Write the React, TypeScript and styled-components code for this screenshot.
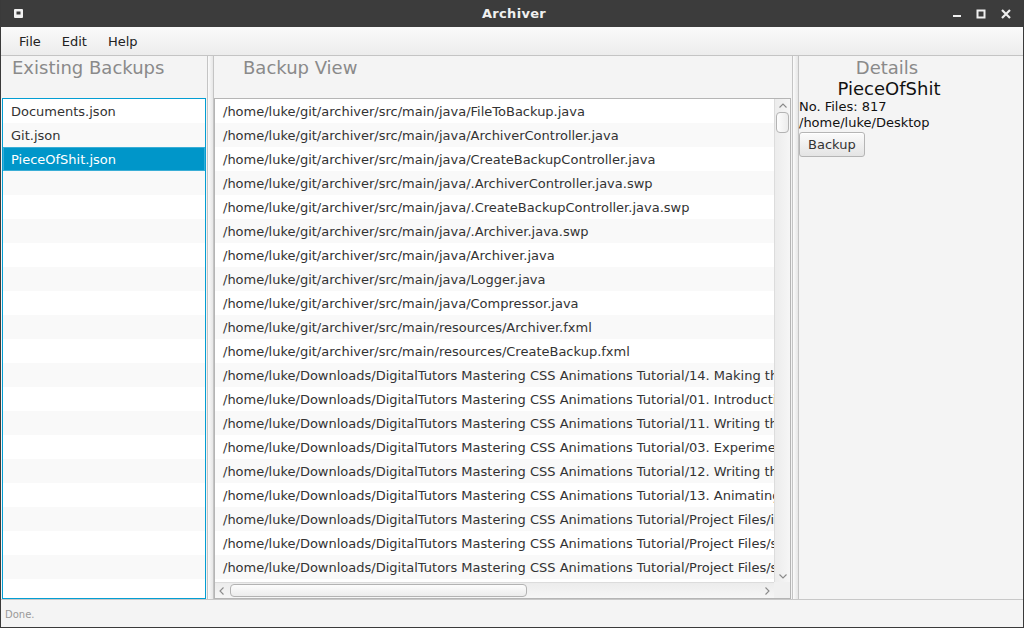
import React from "react";
import styled, { createGlobalStyle } from "styled-components";

const GlobalStyle = createGlobalStyle`
  *, *::before, *::after {
    box-sizing: border-box;
  }
  html, body {
    margin: 0;
    padding: 0;
    background: #3c3c3c;
  }
  body {
    font-family: "DejaVu Sans", "Liberation Sans", sans-serif;
  }
`;

const Window = styled.div`
  width: 1024px;
  height: 628px;
  display: flex;
  flex-direction: column;
  background: #f4f4f4;
  border-left: 1px solid #3a3a3a;
  border-right: 1px solid #3a3a3a;
  border-bottom: 1px solid #3a3a3a;
  overflow: hidden;
`;

const TitleBar = styled.div`
  height: 27px;
  flex: none;
  margin: 0 -1px;
  background: #3c3c3c;
  display: grid;
  grid-template-columns: 1fr auto 1fr;
  align-items: center;
  color: #f0f0f0;
`;

const TitleText = styled.div`
  font-size: 13px;
  font-weight: bold;
  letter-spacing: 0.3px;
  padding-left: 4px;
`;

const TitleLeft = styled.div`
  padding-left: 14px;
  display: flex;
  align-items: center;
`;

const TitleRight = styled.div`
  display: flex;
  justify-content: flex-end;
  align-items: center;
  gap: 14px;
  padding-right: 12px;
`;

const MenuBar = styled.div`
  height: 29px;
  flex: none;
  display: flex;
  align-items: center;
  gap: 1px;
  padding-left: 8px;
  background: linear-gradient(#fafafa, #ececec);
  border-bottom: 1px solid #c4c4c4;
`;

const MenuItem = styled.div`
  font-size: 13px;
  color: #222;
  padding: 2px 10px 0;
  line-height: 26px;
`;

const Content = styled.div`
  flex: 1;
  display: flex;
  min-height: 0;
`;

const Pane = styled.div<{ $width?: number; $padLeft: number }>`
  ${({ $width }) => ($width ? `width: ${$width}px; flex: none;` : "flex: 1;")}
  display: flex;
  flex-direction: column;
  min-width: 0;
  padding: 0 1px 0 ${({ $padLeft }) => $padLeft}px;
`;

const PaneHeader = styled.div<{ $indent: number }>`
  height: 42px;
  flex: none;
  padding: 1px 0 0 ${({ $indent }) => $indent}px;
  font-size: 18px;
  color: #8a8a8a;
  line-height: 22px;
`;

const Divider = styled.div`
  width: 7px;
  flex: none;
  border-left: 1px solid #c4c4c4;
  border-right: 1px solid #c4c4c4;
  background: linear-gradient(to right, #fbfbfb, #e6e6e6);
`;

const ListBox = styled.div<{ $focused?: boolean }>`
  flex: 1;
  min-height: 0;
  background: #fff;
  border: 1px solid ${({ $focused }) => ($focused ? "#039ed3" : "#b5b5b5")};
  display: flex;
  flex-direction: column;
  overflow: hidden;
`;

const ListRows = styled.div`
  flex: 1;
  min-height: 0;
  overflow: hidden;
`;

const Row = styled.div<{ $odd: boolean; $selected?: boolean }>`
  height: 24px;
  line-height: 24px;
  padding-top: 1px;
  font-size: 13px;
  padding-left: 8px;
  white-space: nowrap;
  overflow: hidden;
  color: ${({ $selected }) => ($selected ? "#fff" : "#333")};
  background: ${({ $odd, $selected }) =>
    $selected ? "#0096c9" : $odd ? "#f9f9f9" : "#ffffff"};
  ${({ $selected }) =>
    $selected ? "box-shadow: inset 0 0 0 1px #3aaed6;" : ""}
`;

const ScrollArea = styled.div`
  flex: 1;
  min-height: 0;
  display: grid;
  grid-template-columns: 1fr 16px;
  grid-template-rows: 1fr 16px;
`;

const VTrack = styled.div`
  background: linear-gradient(to right, #ececec, #f6f6f6);
  border-left: 1px solid #dcdcdc;
  display: flex;
  flex-direction: column;
  align-items: center;
`;

const HTrack = styled.div`
  background: linear-gradient(#ececec, #f6f6f6);
  border-top: 1px solid #dcdcdc;
  display: flex;
  align-items: center;
`;

const Corner = styled.div`
  background: #f0f0f0;
`;

const Arrow = styled.div`
  width: 14px;
  height: 13px;
  flex: none;
  display: flex;
  align-items: center;
  justify-content: center;
`;

const VThumb = styled.div`
  width: 13px;
  height: 21px;
  border: 1px solid #b3b3b3;
  border-radius: 4px;
  background: linear-gradient(to right, #fdfdfd, #ececec);
`;

const HThumb = styled.div`
  width: 297px;
  height: 13px;
  margin-left: 1px;
  border: 1px solid #b3b3b3;
  border-radius: 4px;
  background: linear-gradient(#fdfdfd, #ececec);
`;

const Spacer = styled.div`
  flex: 1;
`;

const DetailsPane = styled.div`
  width: 224px;
  flex: none;
  display: flex;
  flex-direction: column;
`;

const DetailsTitle = styled.div`
  width: 176px;
  text-align: center;
  font-size: 18px;
  line-height: 22px;
  padding-top: 1px;
  color: #8a8a8a;
`;

const DetailsName = styled.div`
  width: 180px;
  text-align: center;
  font-size: 18px;
  line-height: 20px;
  color: #111;
`;

const DetailsLine = styled.div`
  font-size: 13px;
  line-height: 16px;
  color: #111;
`;

const Button = styled.button`
  align-self: flex-start;
  margin-top: 1px;
  height: 25px;
  padding: 0 8px;
  font-family: inherit;
  font-size: 13px;
  color: #333;
  border: 1px solid #b5b5b5;
  border-radius: 3px;
  background: linear-gradient(#fbfbfb, #e4e4e4);
  box-shadow: inset 0 1px 0 #fff;
`;

const StatusBar = styled.div`
  height: 28px;
  flex: none;
  border-top: 1px solid #c8c8c8;
  padding-left: 4px;
  font-size: 10px;
  line-height: 29px;
  color: #9a9a9a;
`;

const Chevron = ({ dir }: { dir: "up" | "down" | "left" | "right" }) => {
  const d = {
    up: "M1.5 5.5 L5 2 L8.5 5.5",
    down: "M1.5 2.5 L5 6 L8.5 2.5",
    left: "M5.5 1.5 L2 5 L5.5 8.5",
    right: "M2.5 1.5 L6 5 L2.5 8.5",
  }[dir];
  const vertical = dir === "up" || dir === "down";
  return (
    <svg
      width={vertical ? 10 : 8}
      height={vertical ? 8 : 10}
      viewBox={vertical ? "0 0 10 8" : "0 0 8 10"}
    >
      <path d={d} fill="none" stroke="#8a8a8a" strokeWidth="1.1" />
    </svg>
  );
};

const backups = ["Documents.json", "Git.json", "PieceOfShit.json"];

const tut = "/home/luke/Downloads/DigitalTutors Mastering CSS Animations Tutorial/";
const git = "/home/luke/git/archiver/src/main/";

const files = [
  git + "java/FileToBackup.java",
  git + "java/ArchiverController.java",
  git + "java/CreateBackupController.java",
  git + "java/.ArchiverController.java.swp",
  git + "java/.CreateBackupController.java.swp",
  git + "java/.Archiver.java.swp",
  git + "java/Archiver.java",
  git + "java/Logger.java",
  git + "java/Compressor.java",
  git + "resources/Archiver.fxml",
  git + "resources/CreateBackup.fxml",
  tut + "14. Making the Animation Responsive.mp4",
  tut + "01. Introduction and Project Overview.mp4",
  tut + "11. Writing the Keyframes.mp4",
  tut + "03. Experimenting with Transitions.mp4",
  tut + "12. Writing the Timing Functions.mp4",
  tut + "13. Animating the Elements.mp4",
  tut + "Project Files/index.html",
  tut + "Project Files/style.css",
  tut + "Project Files/script.js",
  tut + "Project Files/images/logo.png",
];

export default function App() {
  return (
    <>
      <GlobalStyle />
      <Window>
        <TitleBar>
          <TitleLeft>
            <svg width="9" height="9" viewBox="0 0 9 9">
              <rect x="0" y="0" width="9" height="9" rx="1" fill="#f2f2f2" />
              <rect x="2.5" y="2.5" width="4" height="3" fill="#3c3c3c" />
            </svg>
          </TitleLeft>
          <TitleText>Archiver</TitleText>
          <TitleRight>
            <svg width="10" height="10" viewBox="0 0 10 10">
              <rect x="1" y="6" width="8" height="2" fill="#efefef" />
            </svg>
            <svg width="10" height="10" viewBox="0 0 10 10">
              <rect x="1.5" y="1.5" width="7" height="7" fill="none" stroke="#efefef" strokeWidth="2" />
            </svg>
            <svg width="12" height="10" viewBox="0 0 12 10">
              <path d="M2 1 L10 9 M10 1 L2 9" stroke="#efefef" strokeWidth="2.2" />
            </svg>
          </TitleRight>
        </TitleBar>
        <MenuBar>
          <MenuItem>File</MenuItem>
          <MenuItem>Edit</MenuItem>
          <MenuItem>Help</MenuItem>
        </MenuBar>
        <Content>
          <Pane $width={206} $padLeft={1}>
            <PaneHeader $indent={10}>Existing Backups</PaneHeader>
            <ListBox $focused>
              <ListRows>
                {Array.from({ length: 22 }).map((_, i) => (
                  <Row key={i} $odd={i % 2 === 1} $selected={i === 2}>
                    {backups[i] ?? ""}
                  </Row>
                ))}
              </ListRows>
            </ListBox>
          </Pane>
          <Divider />
          <Pane $padLeft={0}>
            <PaneHeader $indent={29}>Backup View</PaneHeader>
            <ListBox>
              <ScrollArea>
                <ListRows>
                  {files.map((f, i) => (
                    <Row key={i} $odd={i % 2 === 1}>
                      {f}
                    </Row>
                  ))}
                </ListRows>
                <VTrack>
                  <Arrow>
                    <Chevron dir="up" />
                  </Arrow>
                  <VThumb />
                  <Spacer />
                  <Arrow>
                    <Chevron dir="down" />
                  </Arrow>
                </VTrack>
                <HTrack>
                  <Arrow>
                    <Chevron dir="left" />
                  </Arrow>
                  <HThumb />
                  <Spacer />
                  <Arrow>
                    <Chevron dir="right" />
                  </Arrow>
                </HTrack>
                <Corner />
              </ScrollArea>
            </ListBox>
          </Pane>
          <Divider />
          <DetailsPane>
            <DetailsTitle>Details</DetailsTitle>
            <DetailsName>PieceOfShit</DetailsName>
            <DetailsLine>No. Files: 817</DetailsLine>
            <DetailsLine>/home/luke/Desktop</DetailsLine>
            <Button>Backup</Button>
          </DetailsPane>
        </Content>
        <StatusBar>Done.</StatusBar>
      </Window>
    </>
  );
}
